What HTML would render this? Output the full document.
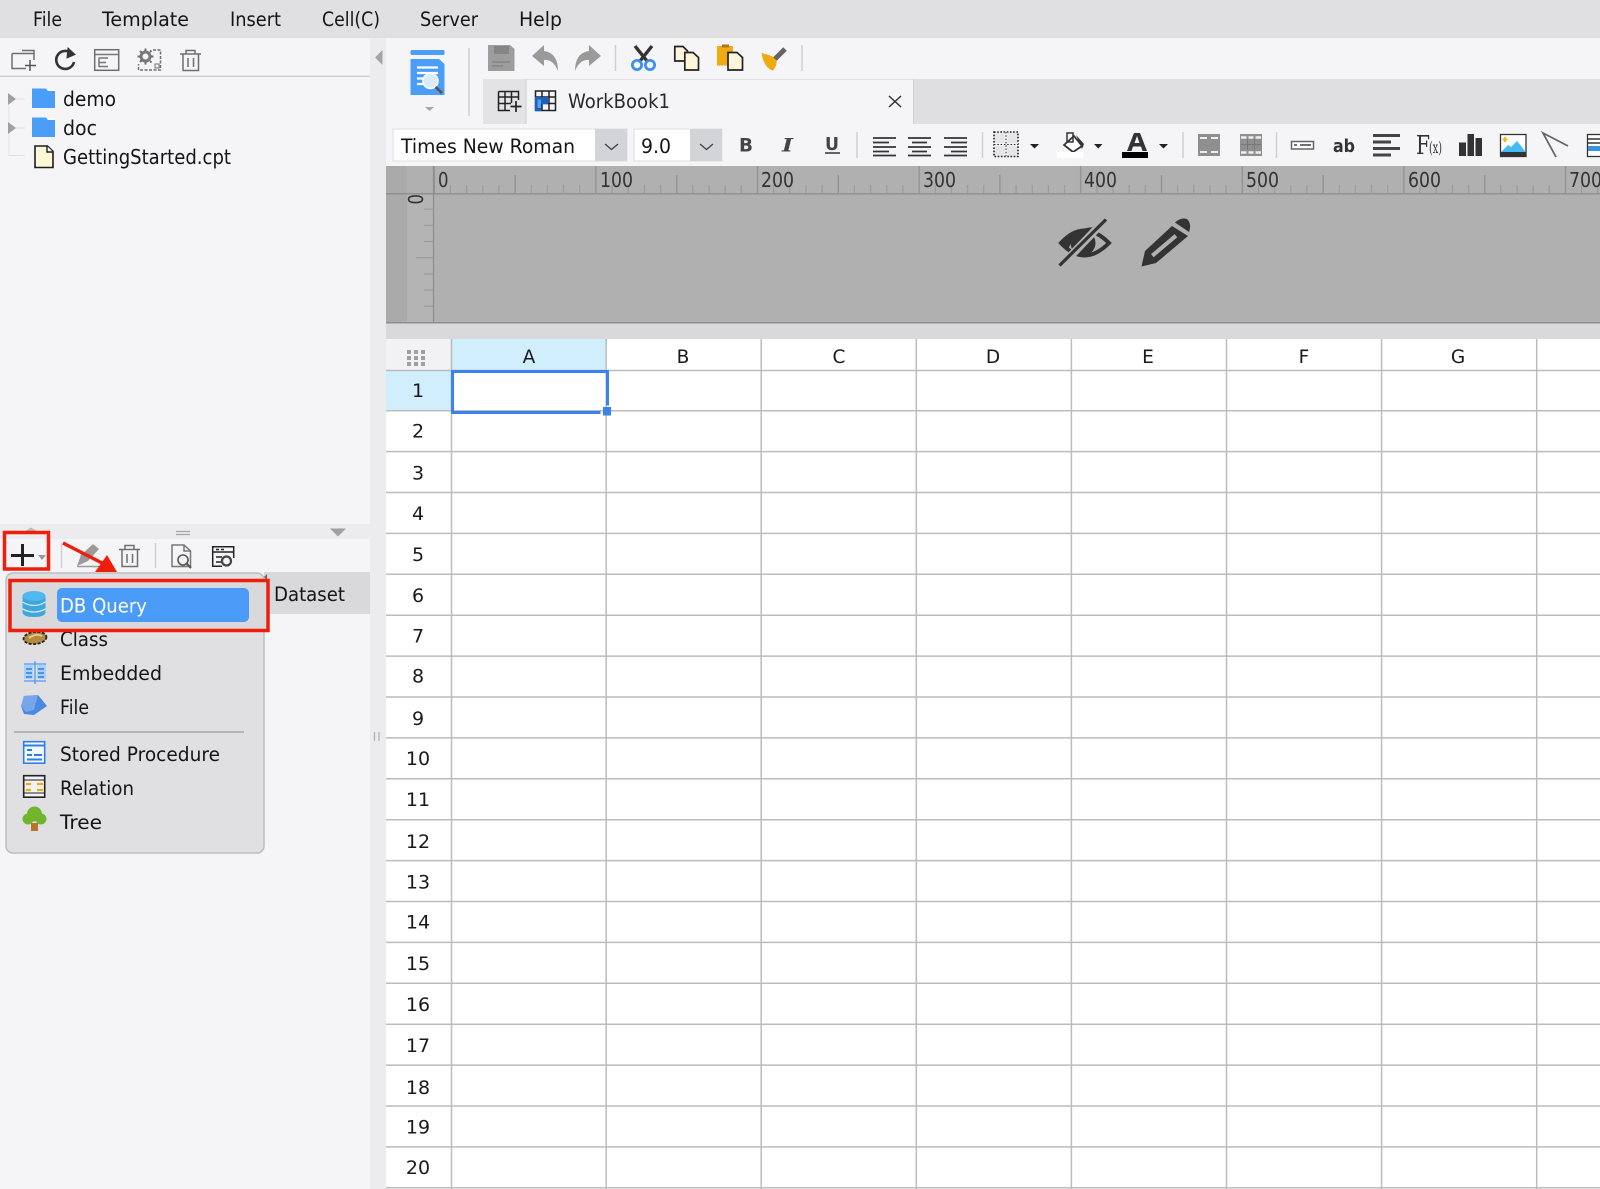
<!DOCTYPE html>
<html><head><meta charset="utf-8"><title>Report designer</title>
<style>
html,body{margin:0;padding:0;background:#fff;width:1600px;height:1189px;overflow:hidden}
svg{display:block}
text{font-family:"DejaVu Sans","Liberation Sans",sans-serif;font-size:19.5px;fill:#151515}
.r{font-size:19px;text-anchor:middle;fill:#1a1a1a}
.c{font-size:18.5px;text-anchor:middle;fill:#1a1a1a}
.u{font-size:20px;fill:#333}
.g{stroke:#bcbcbc;stroke-width:1.5;fill:none}
.s{stroke:#d0d0d2;stroke-width:1.5;fill:none}
</style></head><body>
<svg width="1600" height="1189" viewBox="0 0 1600 1189" xmlns="http://www.w3.org/2000/svg">
<defs>
<pattern id="hr" patternUnits="userSpaceOnUse" x="433.5" y="166" width="161.6" height="29">
<path d="M.8 0V28M81.6 9V28" stroke="#8e8e8e" stroke-width="1.2" fill="none"/>
<path d="M16.96 19V27M33.12 19V27M49.28 19V27M65.44 19V27M97.76 19V27M113.92 19V27M130.08 19V27M146.24 19V27" stroke="#999" stroke-width="1.1" fill="none"/>
</pattern>
</defs>
<!-- backgrounds -->
<rect width="1600" height="1189" fill="#f5f5f7"/>
<rect width="1600" height="38" fill="#e0e0e2"/>
<rect x="370" y="38" width="16" height="1151" fill="#ececee"/>
<rect x="0" y="75.5" width="370" height="1.5" fill="#d2d2d4"/>
<rect x="913" y="79" width="687" height="45" fill="#dfdfe1"/>
<rect x="483" y="79" width="43" height="45" fill="#e3e3e5"/>
<rect x="526" y="79" width="387" height="45" fill="#f5f5f7"/>
<rect x="526" y="79" width="387" height="1" fill="#e2e2e4"/>
<rect x="525.5" y="79" width="1" height="45" fill="#d0d0d2"/>
<rect x="913" y="79" width="1" height="45" fill="#d0d0d2"/>
<rect x="386" y="166" width="1214" height="157" fill="#b0b0b0"/>
<rect x="386" y="166" width="21" height="157" fill="#aaa"/>
<rect x="407" y="193" width="27" height="129" fill="#b4b4b4"/>
<rect x="386" y="323" width="1214" height="16" fill="#d9d9db"/>
<rect x="386" y="322" width="1214" height="1.5" fill="#8f8f8f"/>
<!-- menu bar -->
<text x="33" y="26" textLength="29" lengthAdjust="spacingAndGlyphs">File</text>
<text x="102" y="26" textLength="87" lengthAdjust="spacingAndGlyphs">Template</text>
<text x="230" y="26" textLength="51" lengthAdjust="spacingAndGlyphs">Insert</text>
<text x="322" y="26" textLength="58" lengthAdjust="spacingAndGlyphs">Cell(C)</text>
<text x="420" y="26" textLength="58" lengthAdjust="spacingAndGlyphs">Server</text>
<text x="519" y="26" textLength="43" lengthAdjust="spacingAndGlyphs">Help</text>
<!-- left toolbar icons -->
<g fill="none" stroke="#6e6e6e" stroke-width="1.5">
<path d="M22 50.5H34V53M12 53.5H34V60M12 53.5V68.5H26"/>
<path d="M30 60V71M25 65.5H36" stroke="#555"/>
<path d="M72 54A9 9 0 1 0 74 62" stroke="#333" stroke-width="2.6"/>
<path d="M68 48L75 54.5L67 58Z" fill="#333" stroke="#333" stroke-width="1"/>
<rect x="94.7" y="49.7" width="24" height="20.6"/>
<path d="M95 54.5H118.5M99 57.5V67M99 58H108M99 62.5H106M99 66.5H108" stroke="#777"/>
<path d="M153 50H160.5V70H138.500V64" stroke-dasharray="3 1.500"/>
<circle cx="145.5" cy="56.5" r="4.5" stroke-width="3" stroke="#777"/>
<path d="M145.5 48.5V51M145.5 62V64.5M137.5 56.5H140M151 56.5H153.5M140 51L141.5 52.5M150 61L151.5 62.5M140 62L141.5 60.5M150 52L151.5 50.5" stroke-width="2"/>
<rect x="155" y="64" width="4" height="4" stroke-width="1"/>
<path d="M180 54H201M186 54V50.5H195V54M183 54V70.5H198.5V54M188 58V67M193.5 58V67"/>
</g>
<path d="M375 57.5L382.5 50V65Z" fill="#a4a4a4"/>
<!-- tree -->
<path d="M9 105V155.5H25M16 99H25M16 128H25" stroke="#e2e2e4" fill="none"/>
<path d="M8 93L16 99L8 105ZM8 122L16 128L8 134Z" fill="#a0a0a0"/>
<path d="M32 88.5H46L48 91H55V108H32ZM32 117.5H46L48 120H55V137H32Z" fill="#4b9ef8"/>
<path d="M46.5 89H55V90.5H47.5ZM46.5 118H55V119.5H47.5Z" fill="#fff"/>
<path d="M35 146H47.5L53 151.5V167.5H35Z" fill="#fcf8d6" stroke="#1d1d1d" stroke-width="1.6"/>
<path d="M47 146V152H53" fill="#fff" stroke="#1d1d1d" stroke-width="1.4"/>
<text x="63" y="106" style="font-size:20px" textLength="53" lengthAdjust="spacingAndGlyphs">demo</text>
<text x="63" y="135" style="font-size:20px" textLength="34" lengthAdjust="spacingAndGlyphs">doc</text>
<text x="63" y="164" style="font-size:20px" textLength="168" lengthAdjust="spacingAndGlyphs">GettingStarted.cpt</text>
<!-- top toolbar -->
<rect x="410.5" y="50" width="34" height="5" rx="1.5" fill="#4b9ef8"/>
<path d="M410.5 59H439L444.5 64V95H410.5Z" fill="#4b9ef8"/>
<path d="M417 67.5H438M417 73H438M417 78.5H426M417 84H426" stroke="#fff" stroke-width="2.2"/>
<circle cx="430.5" cy="81" r="7.5" fill="#d9eaf8" stroke="#fff" stroke-width="1.5"/>
<path d="M435.5 87L442 93" stroke="#555" stroke-width="2.6"/>
<path d="M425 107H434L429.5 111Z" fill="#a6a6a6"/>
<path d="M469 48V116" class="s"/>
<path d="M615.5 45V71M802 45V71" class="s"/>
<path d="M488 45H510L514.5 49V71H488Z" fill="#9d9d9d"/>
<rect x="494" y="46" width="15" height="8" fill="#858585"/>
<path d="M492 62H510M492 66H503" stroke="#858585" stroke-width="1.5"/>
<path d="M532 56L544 45V51Q558 53 558 71Q553 59 544 60V66Z" fill="#9a9a9a"/>
<path d="M601 56L589 45V51Q575 53 575 71Q580 59 589 60V66Z" fill="#9a9a9a"/>
<path d="M635 46L647 61M652 46L640 61" stroke="#333" stroke-width="3.4"/>
<circle cx="637" cy="65" r="4.6" fill="#fff" stroke="#3e8ff0" stroke-width="2.8"/>
<circle cx="650" cy="65" r="4.6" fill="#fff" stroke="#3e8ff0" stroke-width="2.8"/>
<path d="M674.800 46.500H683L687.500 51V61H674.800Z" fill="#fdf6dd" stroke="#222" stroke-width="1.700"/>
<path d="M684.800 52.500H693L698.500 57.500V70H684.800Z" fill="#fdf6dd" stroke="#222" stroke-width="1.700"/>
<rect x="717" y="46" width="16" height="19.500" fill="#efab0f"/>
<rect x="722" y="44.500" width="7" height="3" fill="#b5702a"/>
<path d="M728 52.500H737L742.500 57.500V70H728Z" fill="#fdf6dd" stroke="#222" stroke-width="1.700"/>
<path d="M761.500 53Q770 55 775.500 58Q778.500 64 773 70.500Q764 68 761.500 53Z" fill="#efab0f"/>
<path d="M775 59L785 49" stroke="#666" stroke-width="5"/>
<!-- tab row -->
<g fill="none" stroke="#222" stroke-width="1.5">
<path d="M498.5 91.5H518.5V100M498.5 91.5V110.5H510M505 91.5V110.5M511.5 91.5V103M498.5 97H518.5M498.5 103.5H511"/>
<path d="M516 101V112M510.5 106.5H521.5" stroke-width="1.7"/>
<path d="M535.5 91H555.5V110.5H535.5ZM542 91V110.5M549 91V110.5M535.5 97H555.5M535.5 103.5H555.5"/>
</g>
<path d="M535 97H548V104H541.5V111H535Z" fill="#1f5fc0"/>
<path d="M537.5 99.5H541V108H537.5Z" fill="#4ba3f3"/>
<text x="568" y="108" style="fill:#2a2a2a;font-size:19.5px" textLength="102" lengthAdjust="spacingAndGlyphs">WorkBook1</text>
<path d="M889 96L901 107M901 96L889 107" stroke="#333" stroke-width="1.5"/>
<!-- font row -->
<rect x="393" y="129" width="234" height="32" fill="#fff" stroke="#dedee0"/>
<rect x="595" y="129" width="32" height="32" fill="#d3d4d8"/>
<rect x="634" y="129" width="88" height="32" fill="#fff" stroke="#dedee0"/>
<rect x="690" y="129" width="32" height="32" fill="#d3d4d8"/>
<path d="M605 144L611.5 149.5L618 144M700 144L706.5 149.5L713 144" fill="none" stroke="#444" stroke-width="1.4"/>
<text x="401" y="153" textLength="174" lengthAdjust="spacingAndGlyphs">Times New Roman</text>
<text x="641" y="153" textLength="30" lengthAdjust="spacingAndGlyphs">9.0</text>
<text x="739" y="151.5" style="font-size:19px;font-weight:bold;fill:#444" textLength="14" lengthAdjust="spacingAndGlyphs">B</text>
<text x="782" y="151.5" style="font-family:'DejaVu Serif','Liberation Serif',serif;font-size:19px;font-weight:bold;font-style:italic;fill:#444" textLength="11" lengthAdjust="spacingAndGlyphs">I</text>
<text x="825" y="150" style="font-size:18px;font-weight:bold;fill:#444" textLength="14" lengthAdjust="spacingAndGlyphs">U</text>
<path d="M825 153H840" stroke="#333" stroke-width="1.5"/>
<path d="M857 132V158M982.5 132V158M1183 132V158M1276.5 132V158" class="s"/>
<path d="M873 138H896M873 142.5H889M873 147H896M873 151.5H889M873 155.5H896M908 138H931M912 142.5H927M908 147H931M912 151.5H927M908 155.5H931M944 138H967M951 142.5H967M944 147H967M951 151.5H967M944 155.5H967" stroke="#333" stroke-width="1.7"/>
<rect x="994" y="132" width="24" height="24.5" fill="#e6e6e8" stroke="#222" stroke-width="1.6" stroke-dasharray="1.6 1.6"/>
<path d="M1006 132V156M994 144.5H1018" stroke="#f5f5f7" stroke-width="2.500"/>
<path d="M1006 132V156M994 144.500H1018" stroke="#222" stroke-width="1" stroke-dasharray="1.500 1.800"/>
<path d="M1030 144H1039L1034.5 148.5ZM1094 144H1102.5L1098.3 148.5ZM1159 144H1168L1163.5 148.5Z" fill="#222"/>
<path d="M1064 145L1074 136L1082 146L1073 152Z" fill="#fff" stroke="#333" stroke-width="1.8"/>
<path d="M1067 133H1073V142H1067Z" fill="none" stroke="#333" stroke-width="1.5"/>
<path d="M1076 135L1084 144L1082 149Z" fill="#333"/>
<rect x="1057" y="152" width="26" height="6" fill="#fff"/>
<path d="M1127 151L1134 133H1140L1147 151H1142.5L1141 146.5H1133L1131.5 151ZM1134.5 143H1139.5L1137 136Z" fill="#333" fill-rule="evenodd"/>
<rect x="1122" y="152" width="26" height="6" fill="#000"/>
<!-- right icons -->
<rect x="1198" y="134" width="22" height="22" fill="#8f8f8f"/>
<path d="M1200 138H1207M1211 138H1218M1200 152H1207M1211 152H1218" stroke="#eee" stroke-width="2"/>
<rect x="1240" y="134" width="22" height="22" fill="#8f8f8f"/>
<path d="M1241 137.5H1246.5M1248.5 137.5H1253.5M1255.5 137.5H1261M1241 152.5H1246.5M1248.5 152.5H1253.5M1255.5 152.5H1261" stroke="#eee" stroke-width="2.5"/>
<path d="M1247.5 139V150M1254.5 139V150M1241 144.5H1261" stroke="#777" stroke-width="1"/>
<rect x="1291.5" y="141.5" width="22" height="7.5" fill="#fff" stroke="#666" stroke-width="1.5"/>
<path d="M1294 145H1297M1300 145H1311" stroke="#444" stroke-width="1.5"/>
<text x="1333" y="152" style="font-size:18px;font-weight:bold;fill:#333" textLength="22" lengthAdjust="spacingAndGlyphs">ab</text>
<path d="M1373 135.5H1400M1373 142H1391M1373 148.5H1400M1373 155H1391" stroke="#444" stroke-width="3"/>
<text x="1416" y="154" style="font-family:'DejaVu Serif','Liberation Serif',serif;font-size:26px;fill:#333" textLength="14" lengthAdjust="spacingAndGlyphs">F</text>
<text x="1429" y="153" style="font-family:'DejaVu Serif','Liberation Serif',serif;font-size:16px;fill:#333" textLength="13" lengthAdjust="spacingAndGlyphs">(x)</text>
<path d="M1459 142.5H1466V156H1459ZM1467.5 134H1474V156H1467.5ZM1475.5 138H1482V156H1475.5Z" fill="#333"/>
<rect x="1500.5" y="134.5" width="25.5" height="22" fill="#fff" stroke="#333" stroke-width="1.3"/>
<rect x="1500" y="152" width="26.5" height="5" fill="#333"/>
<path d="M1501 152L1508 145L1511 147L1517 141L1525 151V152Z" fill="#46baf2"/>
<path d="M1505 137V142M1502.5 139.5H1507.5" stroke="#f5b71a" stroke-width="2"/>
<path d="M1568 146L1543 133L1556 157" fill="none" stroke="#666" stroke-width="1.8"/>
<rect x="1587.5" y="134.5" width="14" height="22" fill="#fff" stroke="#333" stroke-width="1.3"/>
<path d="M1588 139H1600M1588 143H1600" stroke="#333" stroke-width="1.5"/>
<rect x="1588" y="146" width="12" height="5" fill="#3a8fe8"/>
<!-- rulers -->
<rect x="433.5" y="166" width="1167" height="29" fill="url(#hr)"/>
<path d="M386 193.8H1600" stroke="#939393" stroke-width="1.6"/>
<path d="M433.5 166V322" stroke="#8f8f8f" stroke-width="1.3"/>
<path d="M424 209.200H433M424 225.400H433M424 241.500H433M416 257.700H433M424 273.900H433M424 290H433M424 306.200H433" stroke="#999" stroke-width="1.1"/>
<text class="u" x="438" y="187" textLength="10.500" lengthAdjust="spacingAndGlyphs">0</text>
<text class="u" x="600" y="187" textLength="33" lengthAdjust="spacingAndGlyphs">100</text>
<text class="u" x="761" y="187" textLength="33" lengthAdjust="spacingAndGlyphs">200</text>
<text class="u" x="923" y="187" textLength="33" lengthAdjust="spacingAndGlyphs">300</text>
<text class="u" x="1084" y="187" textLength="33" lengthAdjust="spacingAndGlyphs">400</text>
<text class="u" x="1246" y="187" textLength="33" lengthAdjust="spacingAndGlyphs">500</text>
<text class="u" x="1408" y="187" textLength="33" lengthAdjust="spacingAndGlyphs">600</text>
<text class="u" x="1569" y="187" textLength="33" lengthAdjust="spacingAndGlyphs">700</text>
<text class="u" transform="translate(423 204.500) rotate(-90)" x="0" y="0" textLength="10.500" lengthAdjust="spacingAndGlyphs">0</text>
<!-- eye and pencil -->
<path d="M1061 243Q1084 218 1109 243Q1084 268 1061 243Z" fill="none" stroke="#333" stroke-width="4"/>
<path d="M1062 241Q1072 229 1094 227L1072 240L1068 250Z" fill="#333"/>
<circle cx="1083" cy="243" r="12.500" fill="#333"/>
<path d="M1061 266L1106 219" stroke="#b0b0b0" stroke-width="8"/>
<path d="M1059.500 265.500L1106 219.500" stroke="#333" stroke-width="3.200"/>
<path d="M1141.500 266.500L1145 251L1172 226L1188 236L1156 263Z" fill="#333"/>
<path d="M1175 222.500Q1181 217 1187 219Q1192 224 1189 232Z" fill="#333"/>
<path d="M1152.300 255.700L1176 235.700" stroke="#b0b0b0" stroke-width="4"/>
<!-- grid -->
<rect x="386" y="339" width="1214" height="850" fill="#fff"/>
<rect x="386" y="339" width="65.5" height="31" fill="#f2f2f4"/>
<rect x="452" y="339" width="154" height="31" fill="#d0eefb"/>
<rect x="386" y="371" width="65.5" height="39" fill="#d0eefb"/>
<path d="M407 350h4v4h-4zM414 350h4v4h-4zM421 350h4v4h-4zM407 356h4v4h-4zM414 356h4v4h-4zM421 356h4v4h-4zM407 362h4v4h-4zM414 362h4v4h-4zM421 362h4v4h-4z" fill="#a0a0a2"/>
<path class="g" d="M386 370.5H1600M386 410.7H1600M386 451.6H1600M386 492.5H1600M386 533.4H1600M386 574.3H1600M386 615.2H1600M386 656.1H1600M386 697H1600M386 737.9H1600M386 778.8H1600M386 819.7H1600M386 860.6H1600M386 901.5H1600M386 942.4H1600M386 983.3H1600M386 1024.2H1600M386 1065.1H1600M386 1106H1600M386 1146.9H1600M386 1187.8H1600"/>
<path class="g" d="M451.5 339V1189M606.2 339V1189M761.2 339V1189M916.3 339V1189M1071.4 339V1189M1226.5 339V1189M1381.6 339V1189M1536.7 339V1189"/>
<text class="c" x="529" y="363">A</text>
<text class="c" x="683" y="363">B</text>
<text class="c" x="839" y="363">C</text>
<text class="c" x="993" y="363">D</text>
<text class="c" x="1148" y="363">E</text>
<text class="c" x="1304" y="363">F</text>
<text class="c" x="1458" y="363">G</text>
<text class="r" x="418" y="397">1</text>
<text class="r" x="418" y="437.5">2</text>
<text class="r" x="418" y="479.5">3</text>
<text class="r" x="418" y="520">4</text>
<text class="r" x="418" y="561">5</text>
<text class="r" x="418" y="602">6</text>
<text class="r" x="418" y="642.5">7</text>
<text class="r" x="418" y="682.5">8</text>
<text class="r" x="418" y="725">9</text>
<text class="r" x="418" y="765">10</text>
<text class="r" x="418" y="806">11</text>
<text class="r" x="418" y="848">12</text>
<text class="r" x="418" y="888.5">13</text>
<text class="r" x="418" y="928.5">14</text>
<text class="r" x="418" y="970">15</text>
<text class="r" x="418" y="1011">16</text>
<text class="r" x="418" y="1052">17</text>
<text class="r" x="418" y="1094">18</text>
<text class="r" x="418" y="1133.5">19</text>
<text class="r" x="418" y="1174">20</text>
<path d="M607.500 405.500V371.500H452.500V412.500H600.500" fill="none" stroke="#3a83ee" stroke-width="3"/>
<rect x="603" y="407" width="8" height="8.5" fill="#3a83ee"/>
<!-- left lower panel -->
<rect x="0" y="524" width="370" height="15" fill="#ececee"/>
<path d="M176 531.5H190M176 534.5H190" stroke="#a4a4a4" stroke-width="1.3"/>
<path d="M330 528.5H346L338 536.5Z" fill="#a0a0a0"/>
<path d="M25 531L31 527.5L37 531Z" fill="#bbb"/>
<path d="M11 555.5H34M22.5 544V566" stroke="#222" stroke-width="3"/>
<path d="M38 555H46L42 560Z" fill="#999"/>
<path d="M61.5 543V568M155.5 543V568" class="s"/>
<path d="M77 566L81 555L93 544L99 549L88 561Z" fill="#9a9a9a"/>
<path d="M77 566.5H99" stroke="#9a9a9a" stroke-width="1.5"/>
<g fill="none" stroke="#6e6e6e" stroke-width="1.5">
<path d="M119 549.5H140M125 549.5V545.5H134V549.5M122 549.5V566.5H137.5V549.5M127 554V563M132.5 554V563"/>
<path d="M172 545H184L190.5 551V566.5H172Z" stroke="#777"/>
<path d="M184 545V551H190.5" stroke="#777"/>
</g>
<circle cx="183" cy="560" r="5" fill="#f5f5f7" stroke="#555" stroke-width="1.6"/>
<path d="M186.5 563.5L191 568" stroke="#555" stroke-width="2"/>
<path d="M233.700 558V546.700H212.700V566.300H222" fill="none" stroke="#222" stroke-width="1.500"/>
<path d="M213 552H233M216 549.500H219M221 549.500H224M216 557H222M216 562H222" stroke="#222" stroke-width="1.500"/>
<circle cx="226.500" cy="561" r="4.500" fill="#f5f5f7" stroke="#444" stroke-width="2.200"/>
<rect x="264" y="572" width="106" height="42" fill="#d9d9dc"/>
<path d="M264 577L267 574V580Z" fill="#666"/>
<text x="274" y="601" textLength="71" lengthAdjust="spacingAndGlyphs">Dataset</text>
<!-- popup menu -->
<rect x="6" y="573" width="258" height="280" rx="7" fill="#e0e0e2" stroke="#bdbdbf" stroke-width="1.5"/>
<rect x="10" y="580" width="258" height="51" fill="#d9d9dc"/>
<rect x="57" y="588" width="192" height="34" rx="5" fill="#4a9af8"/>
<path d="M22.5 596V612Q22.5 617 34 617Q45.5 617 45.5 612V596Z" fill="#3ca6df"/>
<ellipse cx="34" cy="596" rx="11.5" ry="5" fill="#4fb9ee"/>
<path d="M22.5 602Q34 609 45.5 602M22.5 609Q34 615 45.5 609" fill="none" stroke="#d9ecf6" stroke-width="1.3"/>
<text x="60" y="612.500" style="fill:#fff" textLength="87" lengthAdjust="spacingAndGlyphs">DB Query</text>
<ellipse cx="35" cy="638" rx="11.5" ry="6" fill="#b28a40" stroke="#222" stroke-width="1.8" stroke-dasharray="3 1.5" transform="rotate(-6 35 638)"/>
<path d="M29 638Q36 633 42 636" stroke="#e7cf95" stroke-width="1.8" fill="none"/>
<text x="60" y="646" textLength="48" lengthAdjust="spacingAndGlyphs">Class</text>
<rect x="24" y="665" width="9" height="14" fill="#a9d0fb"/>
<rect x="37" y="665" width="9" height="14" fill="#a9d0fb"/>
<path d="M24 664H46M24 681H46M35 661V684" stroke="#4a9af8" stroke-width="1.3"/>
<path d="M26 669H32M26 673H32M26 677H32M38 669H44M38 673H44M38 677H44" stroke="#2f7fe0" stroke-width="1.5"/>
<text x="60" y="680" textLength="102" lengthAdjust="spacingAndGlyphs">Embedded</text>
<path d="M24 696L38 695L47 706L34 715L24 714L21 706Z" fill="#4c87e0"/>
<path d="M21 706L24 696L38 695L34 710L26 712Z" fill="#75a6ec"/>
<text x="60" y="714" textLength="29" lengthAdjust="spacingAndGlyphs">File</text>
<path d="M14 732H244" stroke="#a8a8aa" stroke-width="1.5"/>
<rect x="23.7" y="741.7" width="21" height="21.5" fill="#f4f8ff" stroke="#2f7fe8" stroke-width="1.6"/>
<path d="M24 745.5H44M27 750H32M27 755H32M34 755H42M27 759.5H42" stroke="#2f7fe8" stroke-width="2"/>
<text x="60" y="761" textLength="160" lengthAdjust="spacingAndGlyphs">Stored Procedure</text>
<rect x="23.7" y="775.7" width="21" height="21.5" fill="#f2f2f2" stroke="#222" stroke-width="1.6"/>
<path d="M24 780H44M24 793H44" stroke="#222" stroke-width="1"/>
<path d="M26 784H31M37 784H43M26 790H31M37 790H43" stroke="#efab0f" stroke-width="2.2"/>
<text x="60" y="795" textLength="74" lengthAdjust="spacingAndGlyphs">Relation</text>
<circle cx="34.500" cy="814" r="7.500" fill="#70b62c"/>
<circle cx="28" cy="819" r="5.500" fill="#70b62c"/>
<circle cx="41" cy="819" r="5.500" fill="#70b62c"/>
<path d="M31 823H38V831H31Z" fill="#b8762c"/>
<text x="60" y="829" textLength="42" lengthAdjust="spacingAndGlyphs">Tree</text>
<!-- red annotations -->
<rect x="4.5" y="532.5" width="44" height="36.5" fill="none" stroke="#ee1d0c" stroke-width="3.5"/>
<rect x="10" y="580.5" width="258" height="50" fill="none" stroke="#ee1d0c" stroke-width="3.5"/>
<path d="M63 543L104 564" stroke="#ee1d0c" stroke-width="3.500"/>
<path d="M117 572L95 572L107 555Z" fill="#ee1d0c"/>
<path d="M374.5 732V741M379 732V741" stroke="#b0b0b0" stroke-width="1.2"/>
</svg>
</body></html>
